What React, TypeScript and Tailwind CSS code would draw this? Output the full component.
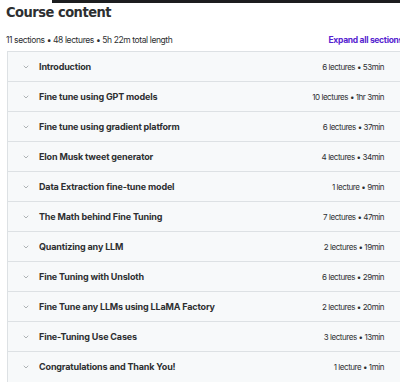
import { ChevronDown } from "lucide-react";

const sections = [
  { title: "Introduction", meta: "6 lectures • 53min" },
  { title: "Fine tune using GPT models", meta: "10 lectures • 1hr 3min" },
  { title: "Fine tune using gradient platform", meta: "6 lectures • 37min" },
  { title: "Elon Musk tweet generator", meta: "4 lectures • 34min" },
  { title: "Data Extraction fine-tune model", meta: "1 lecture • 9min" },
  { title: "The Math behind Fine Tuning", meta: "7 lectures • 47min" },
  { title: "Quantizing any LLM", meta: "2 lectures • 19min" },
  { title: "Fine Tuning with Unsloth", meta: "6 lectures • 29min" },
  { title: "Fine Tune any LLMs using LLaMA Factory", meta: "2 lectures • 20min" },
  { title: "Fine-Tuning Use Cases", meta: "3 lectures • 13min" },
  { title: "Congratulations and Thank You!", meta: "1 lecture • 1min" },
];

export default function App() {
  return (
    <div
      className="w-[400px] h-[382px] overflow-hidden bg-white text-[#2d2f31]"
      style={{ fontFamily: "Inter, 'Noto Sans', sans-serif" }}
    >
      <div className="ml-[52px] h-[3px] bg-[#1c1d1f]" />
      <div className="w-[440px] pl-[6px]">
        <h2
          className="text-[14.5px] font-bold leading-[20px] tracking-[-0.5px] mt-[-1px]"
          style={{ fontFamily: "'DejaVu Sans Condensed', 'Liberation Sans Narrow', Inter, sans-serif" }}
        >
          Course content
        </h2>
        <div className="flex items-center justify-between mt-[11px] h-[14px] pr-[37px]">
          <span className="text-[8.5px] tracking-[-0.4px] text-[#2d2f31] whitespace-nowrap">
            11 sections • 48 lectures • 5h 22m total length
          </span>
          <span className="text-[8.5px] tracking-[-0.3px] font-bold text-[#5624d0] whitespace-nowrap">
            Expand all sections
          </span>
        </div>
        <div className="mt-[4px] ml-[1px] border border-[#dde1e4]">
          {sections.map((s, i) => (
            <div
              key={i}
              className="flex items-center justify-between h-[30px] bg-[#f7f9fa] border-b border-[#dde1e4] last:border-b-0 pl-[14px] pr-[55px]"
            >
              <div className="flex items-center gap-[9px]">
                <ChevronDown size={8} strokeWidth={2} className="text-[#8a8f93]" />
                <span className="text-[9px] tracking-[-0.15px] font-bold whitespace-nowrap">{s.title}</span>
              </div>
              <span className="text-[8px] tracking-[-0.45px] text-[#2d2f31] whitespace-nowrap">{s.meta}</span>
            </div>
          ))}
        </div>
      </div>
    </div>
  );
}
